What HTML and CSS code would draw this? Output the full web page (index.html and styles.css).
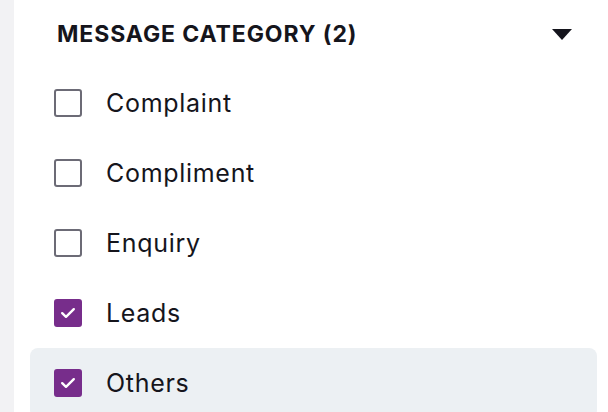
FILE: index.html
```html
<!DOCTYPE html>
<html>
<head>
<meta charset="utf-8">
<link rel="stylesheet" href="styles.css">
</head>
<body>
<div class="page">
  <div class="strip"></div>
  <div class="panel">
    <div class="header">
      <span class="title">MESSAGE CATEGORY (2)</span>
      <svg class="caret" width="20" height="11" viewBox="0 0 20 11"><path d="M0 0H20L10 11Z" fill="#14141c"/></svg>
    </div>
    <ul class="list">
      <li class="item"><span class="box"></span><span class="label">Complaint</span></li>
      <li class="item"><span class="box"></span><span class="label">Compliment</span></li>
      <li class="item"><span class="box"></span><span class="label">Enquiry</span></li>
      <li class="item"><span class="box checked"><svg width="16" height="14" viewBox="0 0 16 14"><path d="M2.2 7.2L6 10.8L13.8 3.2" fill="none" stroke="#fff" stroke-width="2.4" stroke-linecap="round" stroke-linejoin="round"/></svg></span><span class="label">Leads</span></li>
      <li class="item hover"><span class="box checked"><svg width="16" height="14" viewBox="0 0 16 14"><path d="M2.2 7.2L6 10.8L13.8 3.2" fill="none" stroke="#fff" stroke-width="2.4" stroke-linecap="round" stroke-linejoin="round"/></svg></span><span class="label">Others</span></li>
    </ul>
  </div>
</div>
</body>
</html>
```
FILE: styles.css
```css
html, body {
  margin: 0;
  padding: 0;
  background: #fff;
}
.page {
  display: flex;
  height: 412px;
  overflow: hidden;
  font-family: Inter, "Noto Sans", sans-serif;
  color: #15151c;
}
.strip {
  width: 14px;
  flex: none;
  background: #f2f2f4;
}
.panel {
  flex: 1;
  background: #fff;
}
.header {
  display: flex;
  align-items: center;
  justify-content: space-between;
  height: 68px;
  padding: 0 36px 0 43px;
}
.title {
  font-size: 23px;
  font-weight: 700;
  letter-spacing: 0.9px;
}
.caret {
  display: block;
}
.list {
  list-style: none;
  margin: 0;
  padding: 0 11px 0 16px;
}
.item {
  display: flex;
  align-items: center;
  height: 70px;
  padding-left: 24px;
  border-radius: 8px;
}
.item.hover {
  background: #ecf0f3;
}
.box {
  box-sizing: border-box;
  width: 28px;
  height: 28px;
  border: 2.5px solid #6c6b76;
  border-radius: 3px;
  display: flex;
  align-items: center;
  justify-content: center;
  flex: none;
}
.box.checked {
  background: #772d8b;
  border-color: #772d8b;
}
.label {
  margin-left: 24px;
  font-size: 25px;
  font-weight: 400;
  letter-spacing: 0.7px;
}
```
